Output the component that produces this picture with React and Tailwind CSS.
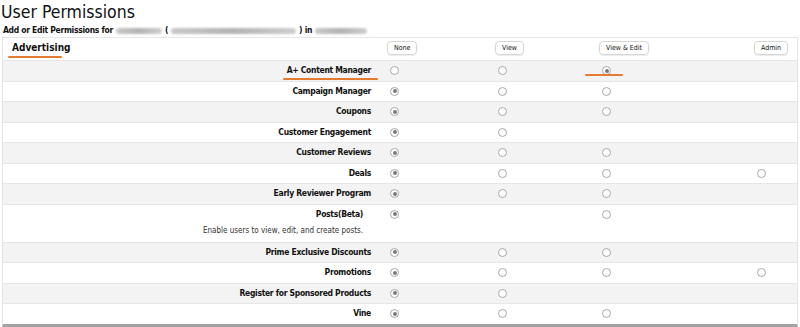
import React from "react";

const font = {
  fontFamily: '"DejaVu Sans Condensed", "Open Sans", sans-serif',
};

// null = no radio, true = checked, false = unchecked
const rows = [
  { name: "A+ Content Manager", opts: [false, false, true, null] },
  { name: "Campaign Manager", opts: [true, false, false, null] },
  { name: "Coupons", opts: [true, false, false, null] },
  { name: "Customer Engagement", opts: [true, false, null, null] },
  { name: "Customer Reviews", opts: [true, false, false, null] },
  { name: "Deals", opts: [true, false, false, false] },
  { name: "Early Reviewer Program", opts: [true, false, false, null] },
  {
    name: "Posts(Beta)",
    opts: [true, null, false, null],
    desc: "Enable users to view, edit, and create posts.",
  },
  { name: "Prime Exclusive Discounts", opts: [true, false, false, null] },
  { name: "Promotions", opts: [true, false, false, false] },
  { name: "Register for Sponsored Products", opts: [true, false, null, null] },
  { name: "Vine", opts: [true, false, false, null] },
];

const levels = ["None", "View", "View & Edit", "Admin"];
const cols = "grid grid-cols-[384px_108px_104px_155px_1fr]";

const Radio = ({ checked }) => (
  <span className="ml-[3px] flex h-[9px] w-[9px] items-center justify-center rounded-full border border-[#a8a8a8] bg-white">
    {checked && <span className="h-[4px] w-[4px] rounded-full bg-[#7a7a7a]" />}
  </span>
);

const Blur = ({ w }) => (
  <span
    className="mx-[3px] inline-block h-[6px] rounded-sm bg-gradient-to-r from-[#c9c9c9] via-[#b3b3b3] to-[#cfcfcf] align-middle blur-[0.8px]"
    style={{ width: w }}
  />
);

export default function App() {
  return (
    <div className="relative h-[327px] w-[800px] overflow-hidden bg-white text-[#111]" style={font}>
      <h1 className="pl-[1px] pt-[1px] text-[17.5px] leading-[22px] font-normal">User Permissions</h1>
      <p className="pl-[3px] pt-[1px] text-[8.5px] leading-[13px] font-bold tracking-[-0.3px]">
        Add or Edit Permissions for
        <Blur w={46} />(
        <Blur w={125} />
        ) in
        <Blur w={52} />
      </p>

      <div className="mx-[2px] border-x border-b-[4px] border-[#e4e4e4] border-b-[#a3a3a3]">
        {/* header */}
        <div className={`${cols} h-[23px] items-start border-t border-[#e6e6e6] pt-[3px]`}>
          <div className="pl-[9px] text-[10px] leading-[13px] font-bold">Advertising</div>
          {levels.map((l) => (
            <div key={l} className="flex">
              <span className="rounded-[4px] border border-[#d6d6d6] px-[6px] text-[7px] leading-[12px] shadow-[0_1px_1px_rgba(0,0,0,0.08)]">
                {l}
              </span>
            </div>
          ))}
        </div>

        {rows.map((r, i) => (
          <div
            key={r.name}
            className={`border-t border-[#e6e6e6] ${i % 2 === 0 ? "bg-[#f3f3f3]" : "bg-white"}`}
          >
            <div className={`${cols} h-[19.5px] items-center`}>
              <div
                className={`flex justify-end text-[8.5px] font-bold tracking-[-0.3px] ${
                  r.desc ? "pr-[24px]" : "pr-[16px]"
                }`}
              >
                {r.name}
              </div>
              {r.opts.map((o, j) => (
                <div key={j} className="flex">
                  {o !== null && <Radio checked={o} />}
                </div>
              ))}
            </div>
            {r.desc && (
              <div className="flex h-[17.5px] w-[384px] justify-end pr-[24px] text-[8px] leading-[14px] text-[#333]">
                <span>{r.desc}</span>
              </div>
            )}
          </div>
        ))}
      </div>

      {/* orange annotation marks */}
      <span className="absolute left-[8px] top-[56px] h-[2px] w-[54px] rounded-full bg-[#e57a32]" />
      <span className="absolute left-[283px] top-[78px] h-[2px] w-[95px] rounded-full bg-[#e57a32]" />
      <span className="absolute left-[585px] top-[74px] h-[2px] w-[38px] rounded-full bg-[#e57a32]" />
    </div>
  );
}
